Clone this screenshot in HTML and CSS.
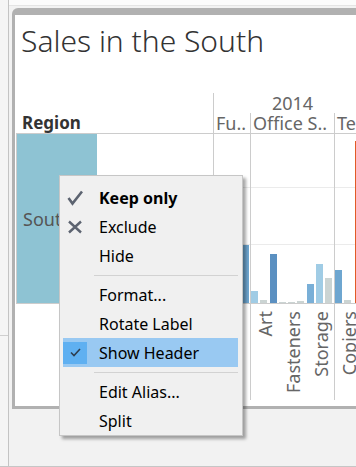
FILE: index.html
```html
<!DOCTYPE html>
<html lang="en">
<head>
    <meta charset="UTF-8">
    <meta name="viewport" content="width=device-width, initial-scale=1.0">
    <title>Sales in the South</title>
    <link rel="stylesheet" href="styles.css">
</head>
<body>

    <div class="screen">
        <!-- Left gutter -->
        <div class="gutter">
            <div class="gutter-tick"></div>
        </div>

        <div class="main">
            <div class="toolbar"></div>

            <!-- Worksheet -->
            <div class="sheet">
                <h1 class="title">Sales in the South</h1>

                <div class="viz">
                    <div class="hd-region">Region</div>
                    <div class="hd-year">2014</div>
                    <div class="hd-cat c3">Fu..</div>
                    <div class="hd-cat c4">Office S..</div>
                    <div class="hd-cat c5">Te</div>

                    <div class="row-label">South</div>
                    <div class="pane"></div>

                    <div class="bars c3">
                        <div class="bar b-light" style="height: 20px"></div>
                        <div class="bar b-gray" style="height: 4px"></div>
                        <div class="bar b-blue" style="height: 58px"></div>
                    </div>
                    <div class="bars c4">
                        <div class="bar b-light" style="height: 12px"></div>
                        <div class="bar b-gray" style="height: 3px"></div>
                        <div class="bar b-dark" style="height: 49px"></div>
                        <div class="bar b-gray" style="height: 1px"></div>
                        <div class="bar b-gray" style="height: 1px"></div>
                        <div class="bar b-gray" style="height: 2px"></div>
                        <div class="bar b-mid" style="height: 19px"></div>
                        <div class="bar b-light" style="height: 39px"></div>
                        <div class="bar b-gray" style="height: 25px"></div>
                    </div>
                    <div class="bars c5">
                        <div class="bar b-blue" style="height: 33px"></div>
                        <div class="bar b-gray" style="height: 3px"></div>
                        <div class="bar-line" style="height: 162px"></div>
                    </div>

                    <div class="axis c3"></div>
                    <div class="axis c4">
                        <div class="axis-label"><span>Art</span></div>
                        <div class="axis-label"><span>Fasteners</span></div>
                        <div class="axis-label"><span>Storage</span></div>
                    </div>
                    <div class="axis c5">
                        <div class="axis-label"><span>Copiers</span></div>
                    </div>
                </div>
            </div>
        </div>

        <!-- Context menu -->
        <div class="menu">
            <div class="menu-item">
                <span class="menu-icon">
                    <svg width="16" height="16" viewBox="0 0 16 16"><polyline points="1.5,8 5.5,13.5 15,1.5" fill="none" stroke="#5c6370" stroke-width="2.6"/></svg>
                </span>
                <span class="menu-text bold">Keep only</span>
            </div>
            <div class="menu-item">
                <span class="menu-icon">
                    <svg width="16" height="14" viewBox="0 0 16 14"><path d="M2 1.5 L14 12.5 M14 1.5 L2 12.5" fill="none" stroke="#5c6370" stroke-width="2.4"/></svg>
                </span>
                <span class="menu-text">Exclude</span>
            </div>
            <div class="menu-item">
                <span class="menu-icon"></span>
                <span class="menu-text">Hide</span>
            </div>
            <div class="menu-sep"></div>
            <div class="menu-item">
                <span class="menu-icon"></span>
                <span class="menu-text">Format...</span>
            </div>
            <div class="menu-item">
                <span class="menu-icon"></span>
                <span class="menu-text">Rotate Label</span>
            </div>
            <div class="menu-item active">
                <span class="menu-icon checked">
                    <svg width="11" height="9" viewBox="0 0 11 9"><polyline points="1,4.5 4,7.5 10,1" fill="none" stroke="#2e3e50" stroke-width="1.6"/></svg>
                </span>
                <span class="menu-text">Show Header</span>
            </div>
            <div class="menu-sep"></div>
            <div class="menu-item">
                <span class="menu-icon"></span>
                <span class="menu-text">Edit Alias...</span>
            </div>
            <div class="menu-item">
                <span class="menu-icon"></span>
                <span class="menu-text">Split</span>
            </div>
        </div>
    </div>

</body>
</html>
```

FILE: styles.css
```css
* {
    margin: 0;
    padding: 0;
    box-sizing: border-box;
}
body {
    background: #f2f2f2;
    font-family: "Noto Sans", "Open Sans", sans-serif;
}
.screen {
    position: relative;
    display: flex;
    width: 356px;
    height: 467px;
    border-bottom: 1px solid #c6c6c6;
    background: #f2f2f2;
    overflow: hidden;
}
/* Left gutter */
.gutter {
    flex: none;
    width: 9px;
    border-right: 1px solid #c4c4c4;
    background: #f5f5f5;
}
.gutter-tick {
    margin-top: 335px;
    height: 1px;
    background: #cfcfcf;
}
.main {
    flex: 1;
    min-width: 0;
    display: flex;
    flex-direction: column;
}
.toolbar {
    flex: none;
    height: 6px;
    margin-bottom: 2px;
    border-bottom: 1px solid #e4e4e4;
    background: #fbfbfb;
}
/* Worksheet */
.sheet {
    flex: none;
    width: 420px;
    height: 401px;
    margin-left: 3px;
    padding-top: 5px;
    border: solid #b1b1b1;
    border-width: 7px 0 3px 3px;
    border-top-left-radius: 6px;
    background: #fff;
}
.title {
    margin: 0 0 32px 6px;
    font-size: 30px;
    line-height: 41px;
    font-weight: 300;
    color: #333;
    white-space: nowrap;
}
.viz {
    display: grid;
    grid-template-columns: 81px 116px 37px 84px 37px;
    grid-template-rows: 20px 20px 171px 96px;
    margin-left: 1px;
    font-size: 18px;
    line-height: 20px;
    color: #666;
}
.c3 { grid-column: 3; }
.c4 { grid-column: 4; }
.c5 { grid-column: 5; }
.hd-region {
    grid-column: 1 / 3;
    grid-row: 1 / 3;
    align-self: end;
    padding-left: 6px;
    font-size: 17px;
    font-weight: 700;
    color: #333;
}
.hd-year {
    grid-column: 3 / 6;
    grid-row: 1;
    text-align: center;
    border-left: 1px solid #ccc;
}
.hd-cat {
    grid-row: 2;
    padding-left: 2px;
    border-left: 1px solid #ccc;
    white-space: nowrap;
}
.row-label {
    grid-column: 1;
    grid-row: 3;
    display: flex;
    align-items: center;
    padding-left: 6px;
    border: 1px solid #ccc;
    border-right: none;
    background: #8ec3d3;
    color: #555;
}
.pane {
    grid-column: 2 / 6;
    grid-row: 3;
    border-top: 1px solid #ccc;
    border-bottom: 1px solid #ccc;
    background-image: linear-gradient(#ebebeb, #ebebeb), linear-gradient(#ebebeb, #ebebeb);
    background-size: 100% 1px;
    background-position: 0 53px, 0 110px;
    background-repeat: no-repeat;
}
.bars {
    grid-row: 3;
    margin: 1px 0;
    display: flex;
    align-items: flex-end;
    gap: 2.3px;
    border-left: 1px solid #ccc;
}
.bars.c3 {
    justify-content: flex-end;
    padding-right: 1px;
}
.bar {
    flex: none;
    width: 7px;
}
.b-light { background: #a0cce5; }
.b-gray { background: #cbd4d3; }
.b-dark { background: #5b90c1; }
.b-mid { background: #79afd7; }
.b-blue { background: #6ea6d0; }
.bar-line {
    flex: none;
    width: 2px;
    margin-left: 1px;
    background: #e15b26;
}
/* Rotated axis labels */
.axis {
    grid-row: 4;
    display: flex;
    padding-top: 7px;
    border-left: 1px solid #ccc;
}
.axis-label {
    flex: none;
    width: 28px;
    display: flex;
    justify-content: center;
    align-items: flex-start;
}
.axis-label span {
    writing-mode: vertical-rl;
    transform: rotate(180deg);
    white-space: nowrap;
}
/* Context menu */
.menu {
    position: absolute;
    left: 59px;
    top: 175px;
    width: 184px;
    height: 261px;
    padding-top: 7px;
    border: 1px solid #c6c6c6;
    background: #f0f0f0;
    box-shadow: 3px 3px 3px rgba(0, 0, 0, 0.35);
    font-size: 16px;
    line-height: 20px;
    color: #000;
}
.menu-item {
    display: flex;
    align-items: center;
    height: 29px;
    margin: 0 4px 0 3px;
}
.menu-item.active {
    background: #99c9f2;
}
.menu-icon {
    flex: none;
    width: 24px;
    height: 22px;
    display: flex;
    align-items: center;
    justify-content: center;
}
.menu-icon.checked {
    background: #5fb0f1;
}
.menu-text {
    margin-left: 12px;
    white-space: nowrap;
}
.menu-text.bold {
    font-weight: 700;
}
.menu-sep {
    height: 1px;
    margin: 5px 4px 4px 34px;
    background: #d2d2d2;
}
```
